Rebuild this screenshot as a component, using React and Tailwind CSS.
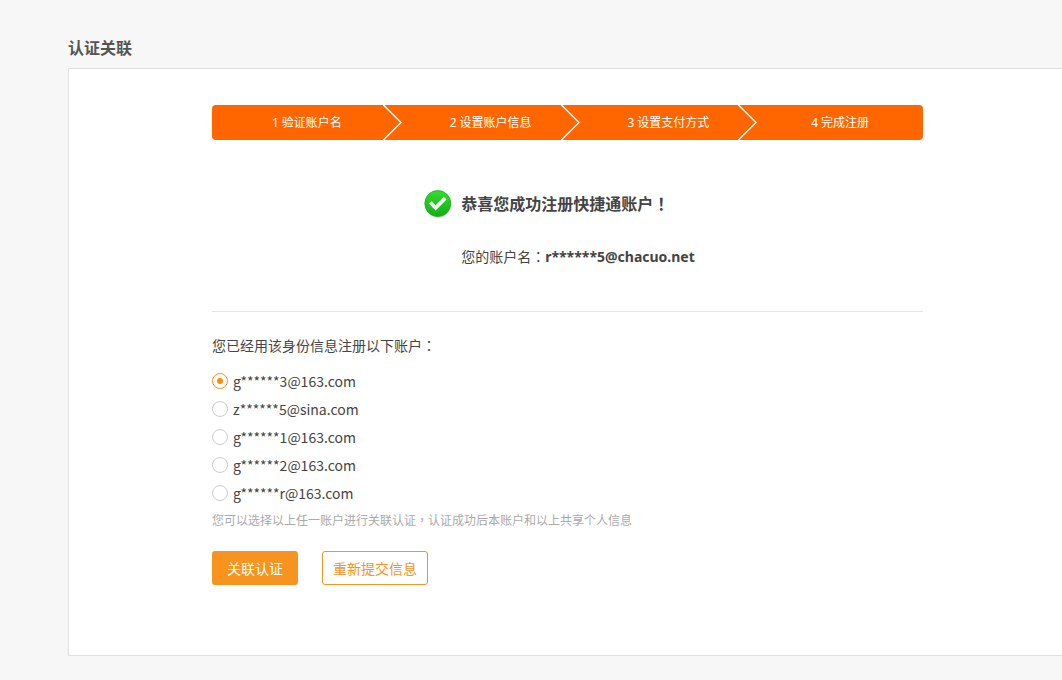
import { useState } from "react";

const STEPS = ["1 验证账户名", "2 设置账户信息", "3 设置支付方式", "4 完成注册"];

const ACCOUNTS = [
  "g******3@163.com",
  "z******5@sina.com",
  "g******1@163.com",
  "g******2@163.com",
  "g******r@163.com",
];

// full-width punctuation, centred in its cell
function Punct({ children }) {
  return <span className="font-['Noto_Sans_CJK_TC',sans-serif] leading-none">{children}</span>;
}

function Steps() {
  return (
    <ol className="grid h-[35px] grid-cols-4 overflow-hidden rounded bg-[#ff6600] text-xs text-white">
      {STEPS.map((step, i) => (
        <li
          key={step}
          className="relative flex items-center justify-center pl-6 first:pl-3 last:pl-3"
        >
          {step}
          {i < STEPS.length - 1 && (
            <svg
              className="absolute top-0 -right-3 h-[35px] w-[19px]"
              viewBox="0 0 19 35"
              fill="none"
              stroke="white"
              strokeWidth="1.4"
            >
              <path d="M0 -0.5L18 17.5L0 35.5" />
            </svg>
          )}
        </li>
      ))}
    </ol>
  );
}

function SuccessIcon() {
  return (
    <svg className="size-7 shrink-0" viewBox="0 0 28 28" fill="none">
      <defs>
        <linearGradient id="ok" x1="0" y1="0" x2="0" y2="1">
          <stop offset="0" stopColor="#35dc2c" />
          <stop offset="1" stopColor="#0fb014" />
        </linearGradient>
      </defs>
      <ellipse cx="14" cy="15" rx="12.5" ry="12.8" fill="#cfd8cf" />
      <circle cx="13.8" cy="13.5" r="13" fill="url(#ok)" stroke="#22a822" strokeWidth="0.8" />
      <path d="M5 13.8L7.6 11.2L11.6 15.2L19.8 6.8L22.6 9.6L11.6 20.6Z" fill="#f2fff0" />
    </svg>
  );
}

export default function App() {
  const [account, setAccount] = useState(ACCOUNTS[0]);

  return (
    <div className="min-h-screen overflow-hidden bg-[#f7f7f7] pt-9 pb-6 pl-[68px] font-['Noto_Sans','Noto_Sans_CJK_SC',sans-serif] text-[#444]">
      <h1 className="mb-2 text-base leading-6 font-bold text-[#555]">认证关联</h1>
      <main className="border border-r-0 border-[#e0e0e0] bg-white pt-9 pr-[139px] pb-[70px] pl-[143px]">
        <Steps />
        <section className="flex flex-col items-center border-b border-[#e6e6e6] pt-[50px] pr-4 pb-11">
          <div className="flex gap-[9px]">
            <SuccessIcon />
            <div>
              <h2 className="text-base leading-7 font-bold">
                恭喜您成功注册快捷通账户<Punct>！</Punct>
              </h2>
              <p className="mt-[29px] text-sm leading-5">
                您的账户名<Punct>：</Punct>
                <strong>r******5@chacuo.net</strong>
              </p>
            </div>
          </div>
        </section>
        <form className="pt-6" onSubmit={(e) => e.preventDefault()}>
          <fieldset>
            <legend className="mb-[11px] text-sm leading-5">
              您已经用该身份信息注册以下账户<Punct>：</Punct>
            </legend>
            {ACCOUNTS.map((name) => (
              <label
                key={name}
                className="flex h-7 items-center gap-[5px] font-['Noto_Sans_CJK_SC',sans-serif] text-sm"
              >
                <input
                  type="radio"
                  name="account"
                  value={name}
                  checked={account === name}
                  onChange={() => setAccount(name)}
                  className="grid size-4 appearance-none place-items-center rounded-full border border-[#ccc] before:size-[6px] before:rounded-full checked:border-[#f7931e] checked:before:bg-[#ff8c00]"
                />
                {name}
              </label>
            ))}
          </fieldset>
          <p className="mt-1 text-xs leading-5 text-[#aaa]">
            您可以选择以上任一账户进行关联认证<Punct>，</Punct>认证成功后本账户和以上共享个人信息
          </p>
          <div className="mt-5 flex gap-6">
            <button
              type="submit"
              className="h-[34px] w-[86px] rounded-[3px] bg-[#f7931e] pt-[2px] text-sm text-white"
            >
              关联认证
            </button>
            <button
              type="button"
              className="h-[34px] w-[106px] rounded-[3px] border border-[#f7931e] pt-[2px] text-sm text-[#f7931e]"
            >
              重新提交信息
            </button>
          </div>
        </form>
      </main>
    </div>
  );
}
